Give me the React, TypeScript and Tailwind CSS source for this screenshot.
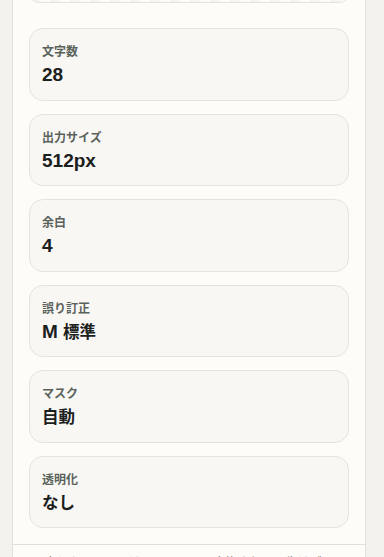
import React from "react";

type Stat = {
  label: string;
  value: string;
};

const stats: Stat[] = [
  { label: "文字数", value: "28" },
  { label: "出力サイズ", value: "512px" },
  { label: "余白", value: "4" },
  { label: "誤り訂正", value: "M 標準" },
  { label: "マスク", value: "自動" },
  { label: "透明化", value: "なし" },
];

const font = {
  fontFamily: '"Liberation Sans", "Noto Sans CJK JP", "Noto Sans", sans-serif',
};

// latin runs a bit larger than the CJK ones, like the system font pairing
function Value({ text }: { text: string }) {
  const parts = text.match(/[\x20-\x7e]+|[^\x20-\x7e]+/g) || [];
  return (
    <>
      {parts.map((p, i) =>
        /^[\x20-\x7e]+$/.test(p) ? (
          <span key={i} className="text-[19px]">
            {p}
          </span>
        ) : (
          <span key={i}>{p}</span>
        ),
      )}
    </>
  );
}

export default function App() {
  return (
    <div className="min-h-screen overflow-hidden bg-[#f3f2ee]" style={font}>
      <div className="ml-[12px] mt-[-334px] w-[354px] border border-[#e2e0d7] bg-[#fdfcf8]">
        <div className="px-[16px] pt-[16px] pb-[16px]">
          {/* preview, scrolled out of view */}
          <div className="aspect-square w-full rounded-[10px] border border-[#e5e3da] bg-[#fdfcf8] bg-[conic-gradient(#f6f5f0_25%,#fdfcf8_0_50%,#f6f5f0_0_75%,#fdfcf8_0)] bg-[length:20px_20px]" />

          <div className="mt-[25px] flex flex-col gap-[13px]">
            {stats.map((s) => (
              <div
                key={s.label}
                className="h-[72.5px] rounded-[14px] border border-[#e5e3da] bg-[#f8f7f3] px-[12px] pt-[15px]"
              >
                <div className="text-[12px] font-bold leading-4 text-[#5a625c]">
                  {s.label}
                </div>
                <div className="mt-px text-[16.5px] font-bold leading-7 text-[#1b201d]">
                  <Value text={s.value} />
                </div>
              </div>
            ))}
          </div>
        </div>

        <div className="border-t border-[#e2e0d7] px-[20px] pt-[8px] pb-4">
          <p className="text-[12px] leading-5 text-[#6b716c]">
            入力したテキストは QR コードに変換され、画像はブラウザ内だけで生成されます。
          </p>
        </div>
      </div>
    </div>
  );
}
